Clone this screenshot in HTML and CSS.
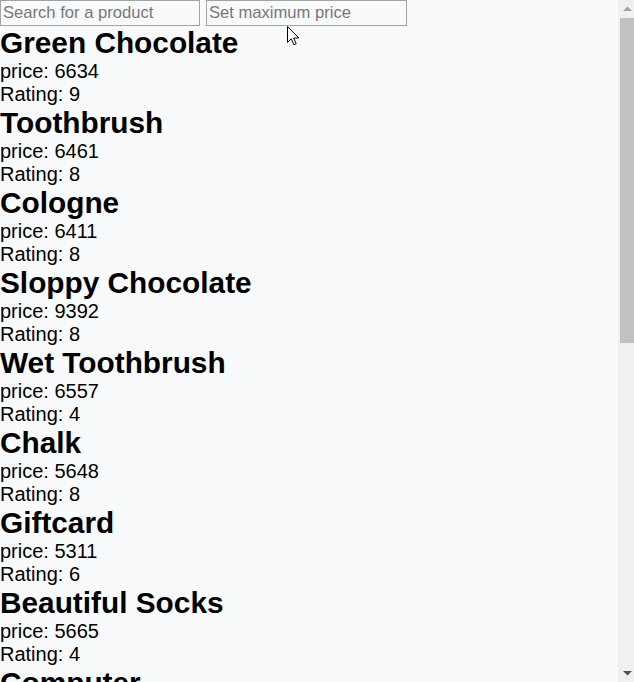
FILE: index.html
```html
<!DOCTYPE html>
<html>
<head>
<meta charset="utf-8">
<link rel="stylesheet" href="styles.css">
</head>
<body>
<div class="filters">
  <input class="field" type="text" placeholder="Search for a product">
  <input class="field" type="text" placeholder="Set maximum price">
</div>
<div class="products">
  <div class="product"><h2 class="name">Green Chocolate</h2><div class="line">price: 6634</div><div class="line">Rating: 9</div></div>
  <div class="product"><h2 class="name">Toothbrush</h2><div class="line">price: 6461</div><div class="line">Rating: 8</div></div>
  <div class="product"><h2 class="name">Cologne</h2><div class="line">price: 6411</div><div class="line">Rating: 8</div></div>
  <div class="product"><h2 class="name">Sloppy Chocolate</h2><div class="line">price: 9392</div><div class="line">Rating: 8</div></div>
  <div class="product"><h2 class="name">Wet Toothbrush</h2><div class="line">price: 6557</div><div class="line">Rating: 4</div></div>
  <div class="product"><h2 class="name">Chalk</h2><div class="line">price: 5648</div><div class="line">Rating: 8</div></div>
  <div class="product"><h2 class="name">Giftcard</h2><div class="line">price: 5311</div><div class="line">Rating: 6</div></div>
  <div class="product"><h2 class="name">Beautiful Socks</h2><div class="line">price: 5665</div><div class="line">Rating: 4</div></div>
  <div class="product"><h2 class="name">Computer</h2><div class="line">price: 7120</div><div class="line">Rating: 7</div></div>
  <div class="product"><h2 class="name">Soap</h2><div class="line">price: 5902</div><div class="line">Rating: 5</div></div>
  <div class="product"><h2 class="name">Red Candle</h2><div class="line">price: 8214</div><div class="line">Rating: 3</div></div>
  <div class="product"><h2 class="name">Shampoo</h2><div class="line">price: 6078</div><div class="line">Rating: 9</div></div>
  <div class="product"><h2 class="name">Blue Mug</h2><div class="line">price: 5533</div><div class="line">Rating: 6</div></div>
  <div class="product"><h2 class="name">Notebook</h2><div class="line">price: 7745</div><div class="line">Rating: 7</div></div>
  <div class="product"><h2 class="name">Old Lamp</h2><div class="line">price: 6890</div><div class="line">Rating: 2</div></div>
  <div class="product"><h2 class="name">Pencil</h2><div class="line">price: 5204</div><div class="line">Rating: 8</div></div>
</div>
<div class="scrollbar">
  <div class="sb-btn"><svg width="9" height="5" viewBox="0 0 9 5"><path d="M0 5 L4.5 0.5 L9 5 Z" fill="#a3a3a3"/></svg></div>
  <div class="sb-track"><div class="sb-thumb"></div></div>
  <div class="sb-btn"><svg width="9" height="5" viewBox="0 0 9 5"><path d="M0 0 L4.5 4.5 L9 0 Z" fill="#505050"/></svg></div>
</div>
<svg class="cursor" width="13" height="21" viewBox="0 0 13 21">
  <path d="M0.5 0.5 L0.5 16.5 L4.3 12.8 L6.8 18.8 L9.2 17.8 L6.7 12 L11.8 12 Z" fill="#fff" stroke="#000" stroke-width="1" stroke-linejoin="miter"/>
</svg>
</body>
</html>
```
FILE: styles.css
```css
html, body {
  margin: 0;
  padding: 0;
  background: #f9fafc;
}
body {
  font-family: "Liberation Sans", Arial, sans-serif;
  color: #000;
}
.filters {
  display: flex;
  gap: 6px;
  height: 26px;
}
.field {
  box-sizing: border-box;
  width: 200px;
  height: 26px;
  margin: 0;
  padding: 0 2px;
  border: 1px solid #a3a3a3;
  background: transparent;
  font-family: "Liberation Sans", Arial, sans-serif;
  font-size: 16.6px;
  color: #000;
  outline: none;
}
.field + .field {
  width: 201px;
}
.field::placeholder {
  color: #777;
}
.product {
  display: flex;
  flex-direction: column;
}
.name {
  margin: 0;
  font-size: 29.8px;
  line-height: 34px;
  font-weight: bold;
}
.line {
  font-size: 20px;
  line-height: 23px;
}
.scrollbar {
  position: fixed;
  top: 0;
  right: 0;
  width: 16px;
  height: 100vh;
  background: #f0f0f0;
  display: flex;
  flex-direction: column;
}
.sb-btn {
  height: 17px;
  display: flex;
  align-items: center;
  justify-content: center;
  padding-left: 2px;
}
.sb-track {
  flex: 1;
  padding-left: 2px;
}
.sb-thumb {
  margin-top: 1px;
  height: 325px;
  background: #c1c1c1;
}
.cursor {
  position: absolute;
  left: 287px;
  top: 26px;
}
```
